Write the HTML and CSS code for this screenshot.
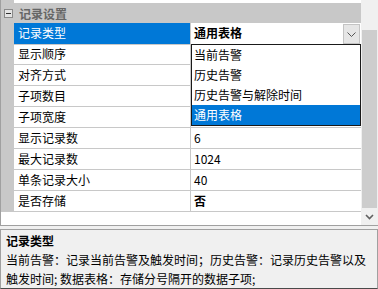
FILE: index.html
```html
<!DOCTYPE html>
<html lang="zh">
<head>
  <meta charset="UTF-8" />
  <title>记录设置</title>
  <link rel="stylesheet" href="styles.css">
</head>
<body>

  <!-- Property grid -->
  <div class="grid">
    <div class="props">
      <div class="row-cut"></div>

      <!-- Category -->
      <div class="cat">
        <svg class="toggle" width="9" height="9" viewBox="0 0 9 9">
          <rect x="0.5" y="0.5" width="8" height="8" fill="#e4e4e4" stroke="#8a8a8a"/>
          <line x1="2" y1="4.5" x2="7" y2="4.5" stroke="#333" stroke-width="1"/>
        </svg>
        <span>记录设置</span>
      </div>

      <div class="row selected">
        <div class="gutter"></div>
        <div class="name">记录类型</div>
        <div class="value combo">
          <span class="combo-text">通用表格</span>
          <span class="combo-btn">
            <svg width="9" height="5" viewBox="0 0 9 5"><polyline points="0.5,0.5 4.5,4.5 8.5,0.5" fill="none" stroke="#555" stroke-width="1"/></svg>
          </span>
        </div>
      </div>
      <div class="row"><div class="gutter"></div><div class="name">显示顺序</div><div class="value"></div></div>
      <div class="row"><div class="gutter"></div><div class="name">对齐方式</div><div class="value"></div></div>
      <div class="row"><div class="gutter"></div><div class="name">子项数目</div><div class="value"></div></div>
      <div class="row"><div class="gutter"></div><div class="name">子项宽度</div><div class="value"></div></div>
      <div class="row"><div class="gutter"></div><div class="name">显示记录数</div><div class="value">6</div></div>
      <div class="row"><div class="gutter"></div><div class="name">最大记录数</div><div class="value">1024</div></div>
      <div class="row"><div class="gutter"></div><div class="name">单条记录大小</div><div class="value">40</div></div>
      <div class="row"><div class="gutter"></div><div class="name">是否存储</div><div class="value bold">否</div></div>

      <!-- Open dropdown of 记录类型 -->
      <ul class="dropdown">
        <li>当前告警</li>
        <li>历史告警</li>
        <li>历史告警与解除时间</li>
        <li class="active">通用表格</li>
      </ul>
    </div>

    <!-- Vertical scrollbar -->
    <div class="scrollbar">
      <div class="track-top"></div>
      <div class="thumb"></div>
      <div class="arrow">
        <svg width="9" height="6" viewBox="0 0 9 6"><polyline points="1,1 4.5,4.5 8,1" fill="none" stroke="#606060" stroke-width="1.6"/></svg>
      </div>
    </div>
  </div>

  <!-- Description pane -->
  <div class="desc">
    <div class="desc-title">记录类型</div>
    <div class="desc-text">当前告警：记录当前告警及触发时间；历史告警：记录历史告警以及触发时间; 数据表格：存储分号隔开的数据子项;</div>
  </div>

</body>
</html>
```

FILE: styles.css
```css
body {
  margin: 0;
  width: 378px;
  height: 289px;
  overflow: hidden;
  background: #f0f0f0;
  font-family: "Noto Sans CJK SC", "Microsoft YaHei", sans-serif;
  font-size: 12px;
  color: #000;
}

/* Property grid */
.grid {
  display: flex;
  height: 226px;
  border-left: 1px solid #a0a0a0;
  border-bottom: 1px solid #a0a0a0;
  box-sizing: border-box;
}

.props {
  position: relative;
  width: 360px;
  background: #fff;
}

.row-cut {
  height: 3px;
  border-left: 13px solid #c8c8c8;
}

.cat {
  display: flex;
  align-items: center;
  height: 20px;
  background: #c8c8c8;
  color: #666;
  font-weight: bold;
}

.toggle {
  margin: 0 6px 0 3px;
}

.row {
  display: grid;
  grid-template-columns: 13px 177px 170px;
  height: 21px;
  line-height: 20px;
}

.gutter {
  background: #c8c8c8;
}

.name {
  padding-left: 4px;
  border-right: 1px solid #c8c8c8;
  border-bottom: 1px solid #c8c8c8;
}

.value {
  padding-left: 3px;
  border-bottom: 1px solid #c8c8c8;
}

.bold {
  font-weight: bold;
}

.row.selected .name {
  background: #0078d7;
  color: #fff;
}

/* Combo box in the selected row */
.combo {
  display: flex;
  justify-content: space-between;
  padding-right: 1px;
}

.combo-text {
  font-weight: bold;
}

.combo-btn {
  display: flex;
  align-items: center;
  justify-content: center;
  width: 15px;
  height: 18px;
  margin-top: 1px;
  background: #e6e6e6;
  border: 1px solid #c4c4c4;
}

/* Drop-down list */
.dropdown {
  position: absolute;
  left: 190px;
  top: 44px;
  width: 170px;
  margin: 0;
  padding: 0;
  list-style: none;
  background: #fff;
  border: 1px solid #1a1a1a;
  box-sizing: border-box;
}

.dropdown li {
  height: 20px;
  line-height: 20px;
  padding-left: 2px;
}

.dropdown li.active {
  background: #0078d7;
  color: #fff;
}

/* Scrollbar */
.scrollbar {
  display: flex;
  flex-direction: column;
  width: 17px;
  background: #f0f0f0;
}

.track-top {
  height: 30px;
}

.thumb {
  flex: 1;
  margin: 0 1px;
  background: #cdcdcd;
}

.arrow {
  display: flex;
  align-items: center;
  justify-content: center;
  height: 17px;
}

/* Description */
.desc {
  margin-top: 3px;
  height: 60px;
  box-sizing: border-box;
  overflow: hidden;
  padding: 2px 5px 0;
  border: 1px solid #a0a0a0;
  border-bottom-color: #4a4a4a;
  background: #f0f0f0;
}

.desc-title {
  font-weight: bold;
  line-height: 18px;
}

.desc-text {
  line-height: 19px;
}
```
